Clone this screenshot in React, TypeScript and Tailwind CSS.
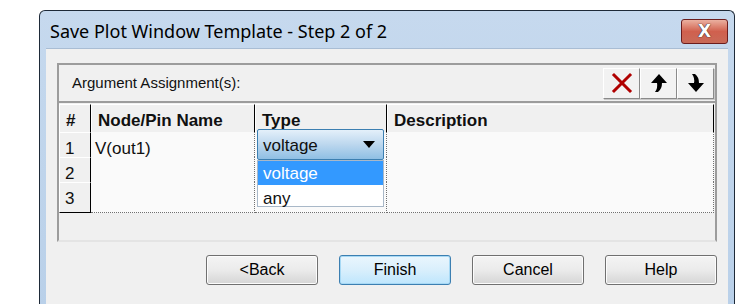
import React from "react";

const cellFont = { fontFamily: '"Liberation Sans", Arial, sans-serif' };

function DeleteIcon() {
  return (
    <svg width="22" height="22" viewBox="0 0 22 22">
      <path d="M3 3 L19 19 M19 3 L3 19" stroke="#b00000" strokeWidth="3" strokeLinecap="square" />
    </svg>
  );
}

function UpIcon() {
  return (
    <svg width="20" height="22" viewBox="0 0 20 22">
      <path d="M10 2 L18 11 L13 11 Q13 17 9 20 L6 20 Q9 16 8 11 L2 11 Z" fill="#000" />
    </svg>
  );
}

function DownIcon() {
  return (
    <svg width="20" height="22" viewBox="0 0 20 22">
      <path d="M10 20 L18 11 L13 11 Q13 5 9 2 L6 2 Q9 6 8 11 L2 11 Z" fill="#000" />
    </svg>
  );
}

function ToolButton({ children }: { children: React.ReactNode }) {
  return (
    <div className="w-[37px] h-[31px] flex items-center justify-center bg-[#f2f2f2] border border-t-white border-l-white border-r-[#8a8a8a] border-b-[#8a8a8a] shadow-[1px_1px_0_#c8c8c8]">
      {children}
    </div>
  );
}

function DialogButton({ label, primary }: { label: string; primary?: boolean }) {
  return (
    <div
      className={`w-[112px] h-[30px] flex items-center justify-center rounded-[3px] border text-[16px] text-black ${
        primary
          ? "border-[#3c7fb1] bg-gradient-to-b from-[#eaf6fd] via-[#d9effc] to-[#bee6fd] shadow-[inset_0_0_0_1px_#a7d9f5]"
          : "border-[#707070] bg-gradient-to-b from-[#f4f4f4] via-[#ebebeb] to-[#d5d5d5] shadow-[inset_0_0_0_1px_#fcfcfc]"
      }`}
      style={{ fontFamily: '"Liberation Sans", Arial, sans-serif' }}
    >
      {label}
    </div>
  );
}

const rows = [
  { n: "1", name: "V(out1)" },
  { n: "2", name: "" },
  { n: "3", name: "" },
];

export default function App() {
  return (
    <div className="w-[743px] h-[304px] bg-white overflow-hidden pl-[39px] pt-[10px]">
      <div className="w-[696px] h-[300px] flex flex-col border border-[#1e2a38] border-b-0 rounded-t-[6px] bg-gradient-to-b from-[#c6d9ee] to-[#b9d0e9]">
        {/* title bar */}
        <div className="h-[37px] flex items-start justify-between pl-[10px] pr-[6px]">
          <span
            className="mt-[9px] text-[18px] leading-[22px] text-black"
            style={{ fontFamily: '"Noto Sans", "Open Sans", sans-serif' }}
          >
            Save Plot Window Template - Step 2 of 2
          </span>
          <div className="mt-[8px] w-[47px] h-[25px] rounded-[3px] border border-[#6b1d1d] bg-gradient-to-b from-[#eab0a0] via-[#d0604e] to-[#c86a58] flex items-center justify-center">
            <span
              className="text-white font-bold text-[17px] leading-none"
              style={{ fontFamily: '"DejaVu Sans", sans-serif', textShadow: "0 0 1px #222, 0 0 1px #222" }}
            >
              X
            </span>
          </div>
        </div>

        {/* client area */}
        <div className="flex-1 mx-[6px] bg-[#f0f0f0] border-t border-[#a9bdd4] pt-[14px] pl-[11px] pr-[10px]">
          <div className="w-[660px] h-[179px] flex flex-col border-2 border-[#9c9c9c] border-b-[#e4e4e4] bg-[#f0f0f0]">
            {/* group header */}
            <div className="h-[38px] flex items-center justify-between pl-[13px] pr-[1px] border-b-2 border-[#9c9c9c]">
              <span className="text-[15px] text-[#111]" style={cellFont}>
                Argument Assignment(s):
              </span>
              <div className="flex">
                <ToolButton>
                  <DeleteIcon />
                </ToolButton>
                <ToolButton>
                  <UpIcon />
                </ToolButton>
                <ToolButton>
                  <DownIcon />
                </ToolButton>
              </div>
            </div>

            {/* table */}
            <div className="relative flex-1" style={cellFont}>
              <div className="grid grid-cols-[32px_164px_132px_327px] h-[29px] pt-[1px]">
                {["#", "Node/Pin Name", "Type", "Description"].map((h) => (
                  <div
                    key={h}
                    className="flex items-center pt-[3px] pl-[6px] text-[17px] font-bold text-[#101010] bg-[#f0f0f0] border-t border-l border-t-white border-l-white border-r border-b border-r-black border-b-black"
                  >
                    {h}
                  </div>
                ))}
              </div>
              {rows.map((r) => (
                <div key={r.n} className="grid grid-cols-[32px_164px_132px_327px] h-[25px]">
                  <div className="flex items-center pt-[3px] pl-[5px] text-[17px] text-[#101010] bg-[#f0f0f0] border-t border-l border-t-white border-l-white border-r border-b border-r-black border-b-black">
                    {r.n}
                  </div>
                  <div className="flex items-center pt-[3px] pl-[4px] text-[17px] text-[#101010] bg-[#fafafa] border-b border-r border-dotted border-[#707070]">
                    {r.name}
                  </div>
                  <div className="bg-[#fafafa] border-b border-r border-dotted border-[#707070]" />
                  <div className="bg-[#fafafa] border-b border-r border-dotted border-[#707070]" />
                </div>
              ))}

              {/* open combo box */}
              <div className="absolute left-[198px] top-[26px] w-[127px] h-[31px] rounded-[2px] border border-[#3c7fb1] bg-gradient-to-b from-[#e4f0fa] via-[#bcd7ee] to-[#8fbfe4] flex items-center justify-between pl-[5px] pr-[8px]">
                <span className="text-[17px] pt-[2px] text-[#101010]">voltage</span>
                <svg width="12" height="7" viewBox="0 0 12 7">
                  <path d="M0 0 L12 0 L6 7 Z" fill="#000" />
                </svg>
              </div>
              <div className="absolute left-[198px] top-[57px] w-[127px] h-[47px] bg-white border border-[#a9b8c8] flex flex-col">
                <div className="h-[24px] bg-[#3399ff] text-white text-[17px] flex items-center pt-[2px] pl-[5px]">voltage</div>
                <div className="flex-1 text-[17px] text-[#101010] flex items-center pt-[1px] pl-[5px]">any</div>
              </div>
            </div>
          </div>

          {/* dialog buttons */}
          <div className="flex justify-end gap-[21px] mt-[13px] pr-[1px]">
            <DialogButton label="<Back" />
            <DialogButton label="Finish" primary />
            <DialogButton label="Cancel" />
            <DialogButton label="Help" />
          </div>
        </div>
      </div>
    </div>
  );
}
